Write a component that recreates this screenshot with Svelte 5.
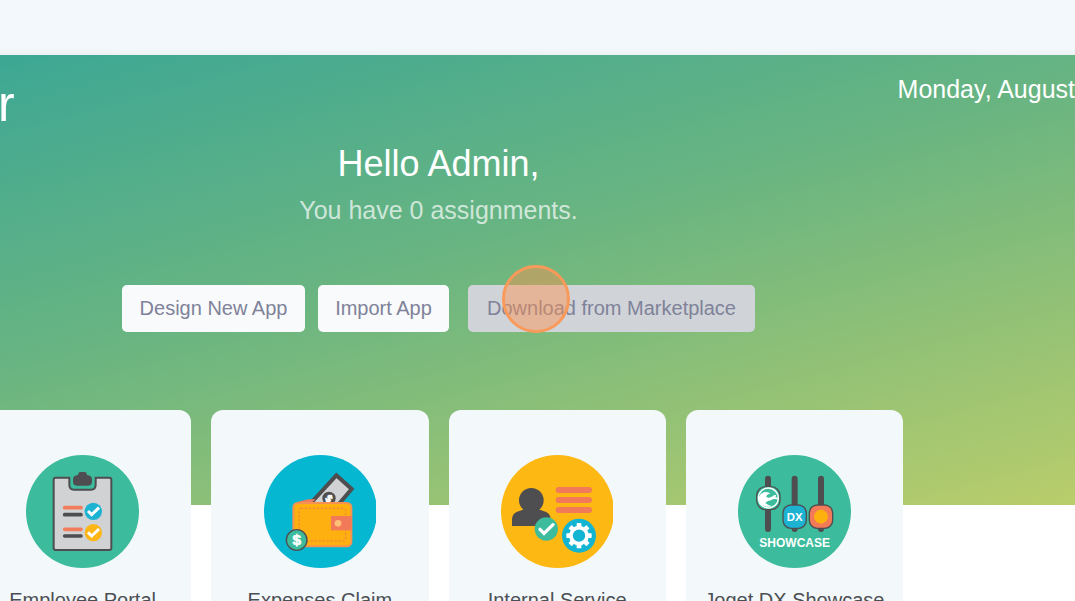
<script lang="ts">
    let apps = [
        { name: 'Employee Portal', icon: 'portal' },
        { name: 'Expenses Claim', icon: 'expenses' },
        { name: 'Internal Service', icon: 'service' },
        { name: 'Joget DX Showcase', icon: 'showcase' }
    ];

    let user = $state('Admin');
    let assignments = $state(0);
</script>

{#snippet check(x: number, y: number, r: number, color: string)}
    <g transform="translate({x} {y})">
        <circle {r} fill={color} />
        <path d="M-16 -1 L-5 10 L17 -11" fill="none" stroke="#fff" stroke-width="9" />
    </g>
{/snippet}

<div class="page">
    <header class="topbar"></header>

    <section class="hero">
        <div class="heading">
            <h1>r</h1>
            <time>Monday, August</time>
        </div>
        <div class="welcome">
            <h2>Hello {user},</h2>
            <p>You have {assignments} assignments.</p>
            <div class="actions">
                <button class="design">Design New App</button>
                <button class="import">Import App</button>
                <button class="download">
                    Download from Marketplace
                    <span class="pointer"></span>
                </button>
            </div>
        </div>
    </section>

    <main class="apps">
        {#each apps as app}
            <a class="card" href="#{app.icon}">
                {#if app.icon === 'portal'}
                    <svg viewBox="33 30 339 339" width="113" height="113" aria-hidden="true">
                        <circle cx="202.5" cy="199.5" r="169.5" fill="#3cbc9c" />
                        <path d="M122 98 H163 V120 Q163 134 177 134 H228 Q242 134 242 120 V98 H283 Q289 98 289 104 V309 Q289 315 283 315 H122 Q116 315 116 309 V104 Q116 98 122 98 Z" fill="#d0d2d3" stroke="#4e4e50" stroke-width="6" />
                        <path d="M195 81 H210 Q215 81 216 90 Q231 91 231 103 V110 Q231 122 218 122 H187 Q174 122 174 110 V103 Q174 91 189 90 Q190 81 195 81 Z" fill="#4e4e50" />
                        <g fill="none" stroke-width="11" stroke-linecap="round">
                            <path d="M149 188 H198 M149 253 H198" stroke="#f27d5c" />
                            <path d="M149 209 H198 M149 273 H198" stroke="#4e4e50" />
                        </g>
                        {@render check(235, 199, 26, '#1cb3d3')}
                        {@render check(235, 263, 26, '#fdb615')}
                    </svg>
                {:else if app.icon === 'expenses'}
                    <svg viewBox="33 30 336 339" width="112" height="113" aria-hidden="true">
                        <circle cx="202.5" cy="199.5" r="169.5" fill="#06b7d1" />
                        <path d="M250 91 L296 132 L226 214 L174 174 Z" fill="#d0d2d3" stroke="#4e4e50" stroke-width="12" />
                        <circle cx="228" cy="160" r="20" fill="#4e4e50" />
                        <text x="228" y="171" class="coin" font-size="31" transform="rotate(38 228 160)">$</text>
                        <path d="M132 171 L165 163 H188 L174 174 Z" fill="#f27d5c" />
                        <rect x="121" y="174" width="174" height="130" rx="13" fill="#fdb010" stroke="#f59252" stroke-width="6" />
                        <rect x="138" y="190" width="140" height="98" rx="6" fill="none" stroke="#f27d40" stroke-width="3" stroke-dasharray="7 5" />
                        <rect x="234" y="213" width="62" height="43" fill="#f37a58" />
                        <circle cx="255" cy="235" r="10" fill="#ffc078" />
                        <circle cx="131" cy="285" r="31" fill="#3cbc9c" stroke="#4e4e50" stroke-width="4" />
                        <text x="131" y="301" class="coin" font-size="46">$</text>
                    </svg>
                {:else if app.icon === 'service'}
                    <svg viewBox="33 30 336 339" width="112" height="113" aria-hidden="true">
                        <circle cx="202.5" cy="199.5" r="169.5" fill="#fdb813" />
                        <circle cx="124" cy="166" r="37" fill="#4e4e50" />
                        <path d="M66 243 V222 Q66 203 90 197 Q103 195 105 186 H143 Q145 195 158 197 Q182 203 182 222 V243 Z" fill="#4e4e50" />
                        <path d="M206 135 H297 M206 165 H297 M206 195 H297" fill="none" stroke="#f37a58" stroke-width="18" stroke-linecap="round" />
                        <g transform="translate(169 252)">
                            <circle r="35" fill="#3cbc9c" />
                            <path d="M-19 1 L-7 13 L20 -13" fill="none" stroke="#fff" stroke-width="10" stroke-linecap="round" />
                        </g>
                        <g transform="translate(267 272)">
                            <circle r="51" fill="#12b4d2" />
                            {#each [0, 45, 90, 135] as angle}
                                <rect x="-7" y="-38" width="14" height="76" rx="2" fill="#fff" transform="rotate({angle})" />
                            {/each}
                            <circle r="24" fill="#12b4d2" stroke="#fff" stroke-width="11" />
                        </g>
                    </svg>
                {:else}
                    <svg viewBox="33 30 339 339" width="113" height="113" aria-hidden="true">
                        <circle cx="202.5" cy="199.5" r="169.5" fill="#3cbc9c" />
                        <path d="M123 101 V252 M203 101 V252 M282 101 V252" fill="none" stroke="#4e4e50" stroke-width="18" stroke-linecap="round" />
                        <g stroke="#4e4e50" stroke-width="4">
                            <rect x="89" y="125" width="70" height="69" rx="27" fill="#3cbc9c" />
                            <rect x="168" y="180" width="70" height="70" rx="24" fill="#1cb3d3" />
                            <rect x="247" y="180" width="70" height="70" rx="24" fill="#f37a58" />
                        </g>
                        <circle cx="124" cy="159" r="30" fill="#3cbc9c" stroke="#fff" stroke-width="4" />
                        <path d="M95 161 Q96 147 111 142 Q124 139 130 147 Q119 146 118 156 Q127 161 137 154 Q143 148 148 151 L145 157 L153 158 V163 Q137 161 133 165 Q122 167 115 173 Q122 182 138 183 Q111 191 99 174 Z" fill="#fff" />
                        <circle cx="282" cy="215" r="21" fill="#fdb10f" />
                        <text x="203" y="227" class="badge" font-size="34">DX</text>
                        <text x="203" y="305" class="badge" font-size="36">SHOWCASE</text>
                    </svg>
                {/if}
                <span>{app.name}</span>
            </a>
        {/each}
    </main>
</div>

<style>
    :global(body) {
        margin: 0;
        background: #fff;
        overflow: hidden;
    }

    .page {
        font-family: "Liberation Sans", Arial, sans-serif;
    }

    .topbar {
        height: 55px;
        background: linear-gradient(#f3f8fc 48px, #ecf1f3);
    }

    .hero {
        box-sizing: border-box;
        min-height: 450px;
        background: linear-gradient(165deg, #3da794, #6ab581 44%, #b9cd6b);
        color: #fff;
    }

    .heading {
        display: flex;
        justify-content: space-between;
        height: 86px;
    }

    h1 {
        margin: 21px 0 0 -2px;
        font-size: 50px;
        font-weight: 400;
        line-height: 56px;
    }

    time {
        margin-top: 19px;
        font-size: 25px;
        line-height: 30px;
        white-space: nowrap;
    }

    .welcome {
        margin-right: 198px;
        text-align: center;
    }

    h2 {
        margin: 0;
        font-size: 36px;
        font-weight: 400;
        line-height: 46px;
    }

    p {
        margin: 7px 0 0;
        font-size: 25px;
        line-height: 32px;
        color: rgba(255, 255, 255, 0.7);
    }

    .actions {
        display: flex;
        justify-content: center;
        margin-top: 59px;
    }

    button {
        position: relative;
        height: 47px;
        padding: 0 16px;
        border: 0;
        border-radius: 5px;
        background: #f8fafc;
        color: #7f8299;
        font-family: inherit;
        font-size: 20px;
        white-space: nowrap;
        cursor: pointer;
    }

    .design {
        min-width: 183px;
    }

    .import {
        min-width: 131px;
        margin-left: 13px;
    }

    .download {
        min-width: 287px;
        margin-left: 19px;
        background: #d0d3d8;
    }

    .pointer {
        position: absolute;
        top: -20px;
        left: 34px;
        box-sizing: border-box;
        width: 68px;
        height: 68px;
        border: 3px solid #f9995a;
        border-radius: 50%;
        background: rgba(252, 144, 78, 0.45);
    }

    .apps {
        display: grid;
        grid-template-columns: repeat(4, 1fr);
        gap: 20px;
        margin: -95px 172px 0 -26px;
    }

    .card {
        display: flex;
        flex-direction: column;
        align-items: center;
        padding: 45px 0 40px;
        border-radius: 12px;
        background: #f3f8fb;
        color: #4b4f54;
        font-size: 20px;
        line-height: 26px;
        text-decoration: none;
        white-space: nowrap;
    }

    .card span {
        margin-top: 19px;
    }

    .coin {
        fill: #fff;
        stroke: #fff;
        stroke-width: 2;
        font-weight: 700;
        text-anchor: middle;
    }

    .badge {
        fill: #fff;
        font-weight: 700;
        text-anchor: middle;
    }
</style>
